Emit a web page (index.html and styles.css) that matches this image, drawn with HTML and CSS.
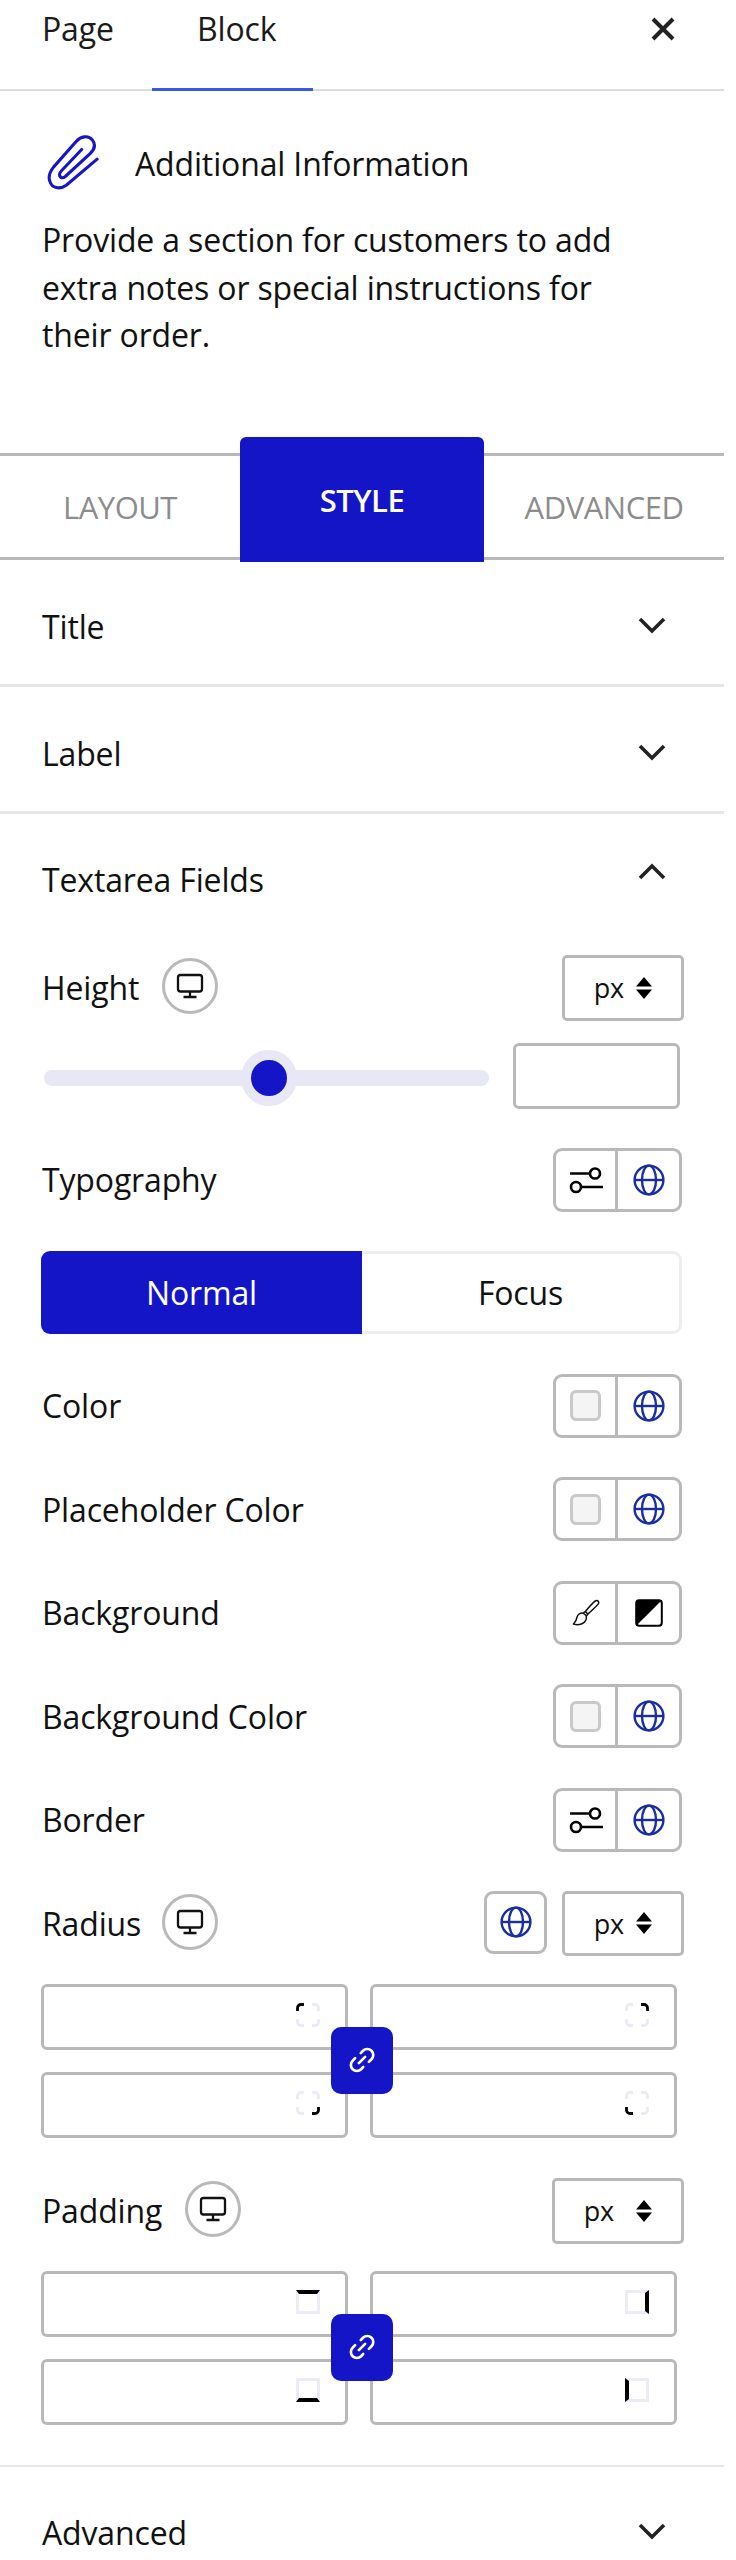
FILE: index.html
```html
<!DOCTYPE html>
<html lang="en">
<head>
<meta charset="utf-8">
<title>Additional Information</title>
<link rel="stylesheet" href="styles.css">
</head>
<body>
<svg class="defs" width="0" height="0" aria-hidden="true">
  <symbol id="globe" viewBox="0 0 32 32"><g fill="none" stroke="#1a2ea3" stroke-width="2.4"><circle cx="16" cy="16" r="14.4"/><ellipse cx="16" cy="16" rx="7" ry="14.4"/><path d="M2 16h28"/></g></symbol>
  <symbol id="sliders" viewBox="0 0 36 28"><g fill="none" stroke="#000" stroke-width="2.6"><path d="M2 7.5h19M13 21h22"/><circle cx="27" cy="7.5" r="5"/><circle cx="8" cy="21" r="5"/></g></symbol>
  <symbol id="monitor" viewBox="0 0 28 26"><g fill="none" stroke="#111" stroke-width="2.3"><rect x="2" y="2" width="24" height="16.5" rx="2.5"/><path d="M14 18.5v5M7.5 24h13"/></g></symbol>
  <symbol id="chev" viewBox="0 0 30 18"><path d="M3 3l12 12L27 3" fill="none" stroke="#222" stroke-width="3.6"/></symbol>
  <symbol id="updown" viewBox="0 0 16 22"><path d="M8 0l8 9.500H0zM8 22L0 12.500h16z" fill="#000"/></symbol>
  <symbol id="link" viewBox="0 0 24 24"><g fill="none" stroke="#fff" stroke-width="2.1" stroke-linecap="round"><path d="M9.500 14.500l5-5"/><path d="M11 6.500l1.800-1.900a4.800 4.800 0 0 1 6.800 6.800L17.500 13.500"/><path d="M6.500 10.500l-2 2.100a4.800 4.800 0 0 0 6.800 6.800L13 17.500"/></g></symbol>
  <symbol id="r-tl" viewBox="0 0 24 24"><g fill="none" stroke-width="2.8"><path stroke="#ebebf6" d="M16 1.500h3a3.500 3.500 0 0 1 3.500 3.500v3M22.500 16v3a3.500 3.500 0 0 1-3.500 3.500h-3M8 22.500H5A3.500 3.500 0 0 1 1.500 19v-3"/><path stroke="#000" d="M1.500 8V5A3.500 3.500 0 0 1 5 1.500h3"/></g></symbol>
</svg>

<div class="panel">
  <div class="topbar">
    <div class="toptab toptab-page">Page</div>
    <div class="toptab toptab-active">Block</div>
    <svg class="close" viewBox="0 0 26 26" aria-label="Close"><path d="M3 3l20 20M23 3L3 23" stroke="#222" stroke-width="4" fill="none"/></svg>
  </div>

  <div class="blockhead">
    <svg class="clip" viewBox="25 14 55 58"><path d="M77 39L45 66C38 71 30 69 28 62C26 57 28 52 32 47L55 21C60 15 68 14 72 19C76 24 74 29 70 33L44 57C41 59.500 38 58 38 55C38 53 39 52 41 50L61 29" fill="none" stroke="#1616c8" stroke-width="3.2" stroke-linecap="round"/></svg>
    <span class="blockname">Additional Information</span>
  </div>
  <p class="blockdesc">Provide a section for customers to add<br>extra notes or special instructions for<br>their order.</p>

  <div class="tabs">
    <div class="tab">LAYOUT</div>
    <div class="tab tab-active">STYLE</div>
    <div class="tab">ADVANCED</div>
  </div>

  <div class="acc-head acc-closed"><span>Title</span><svg class="chev"><use href="#chev"/></svg></div>
  <div class="acc-head acc-closed"><span>Label</span><svg class="chev"><use href="#chev"/></svg></div>

  <section class="acc-open">
    <div class="acc-head"><span>Textarea Fields</span><svg class="chev chev-up"><use href="#chev"/></svg></div>

    <div class="row row-height">
      <div class="lbl"><span>Height</span><span class="device"><svg><use href="#monitor"/></svg></span></div>
      <div class="select"><span>px</span><svg class="updown"><use href="#updown"/></svg></div>
    </div>

    <div class="slider-row">
      <div class="slider"><span class="knob"></span></div>
      <div class="numbox"></div>
    </div>

    <div class="row row-gap-typo">
      <span>Typography</span>
      <div class="pair"><div class="cell"><svg class="i-sliders"><use href="#sliders"/></svg></div><div class="cell"><svg class="i-globe"><use href="#globe"/></svg></div></div>
    </div>

    <div class="switch"><div class="sw sw-on">Normal</div><div class="sw">Focus</div></div>

    <div class="row row-first">
      <span>Color</span>
      <div class="pair"><div class="cell"><span class="swatch"></span></div><div class="cell"><svg class="i-globe"><use href="#globe"/></svg></div></div>
    </div>
    <div class="row">
      <span>Placeholder Color</span>
      <div class="pair"><div class="cell"><span class="swatch"></span></div><div class="cell"><svg class="i-globe"><use href="#globe"/></svg></div></div>
    </div>
    <div class="row">
      <span>Background</span>
      <div class="pair">
        <div class="cell"><svg class="i-brush" viewBox="0 0 28 28"><g fill="none" stroke="#111" stroke-width="1.5" stroke-linejoin="round"><path d="M26.500 4.500c.8-1.800-.9-3.600-2.800-2.700c-1.100.5-8 8-10.300 10.800l2.500 2.400c3-2.400 10-9.300 10.600-10.500z"/><path d="M13.400 12.600c-.8.300-1.500.9-1.900 1.600l2.800 2.600c.7-.4 1.300-1 1.600-1.800"/><path d="M11.500 14.200c-3-.8-6 1-6.500 4c-.3 2.600-1.400 4.700-3.500 6.800c4.500 1.500 10.500.3 12.300-3.700c.7-1.500.8-3 .5-4.500"/></g></svg></div>
        <div class="cell"><svg class="i-half" viewBox="0 0 28 28"><rect x="1.200" y="1.200" width="25.600" height="25.600" rx="3" fill="#fff" stroke="#000" stroke-width="2"/><path d="M4 1.200h22.800L1.200 26.800V4A3 3 0 0 1 4 1.200z" fill="#000"/></svg></div>
      </div>
    </div>
    <div class="row">
      <span>Background Color</span>
      <div class="pair"><div class="cell"><span class="swatch"></span></div><div class="cell"><svg class="i-globe"><use href="#globe"/></svg></div></div>
    </div>
    <div class="row">
      <span>Border</span>
      <div class="pair"><div class="cell"><svg class="i-sliders"><use href="#sliders"/></svg></div><div class="cell"><svg class="i-globe"><use href="#globe"/></svg></div></div>
    </div>

    <div class="row row-radius">
      <div class="lbl lbl-radius"><span>Radius</span><span class="device"><svg><use href="#monitor"/></svg></span></div>
      <div class="radius-right">
        <div class="globe-btn"><svg class="i-globe"><use href="#globe"/></svg></div>
        <div class="select"><span>px</span><svg class="updown"><use href="#updown"/></svg></div>
      </div>
    </div>

    <div class="quad">
      <div class="field"><svg class="corner"><use href="#r-tl"/></svg></div>
      <div class="field"><svg class="corner c-tr"><use href="#r-tl"/></svg></div>
      <div class="field"><svg class="corner c-bl"><use href="#r-tl"/></svg></div>
      <div class="field"><svg class="corner c-br"><use href="#r-tl"/></svg></div>
      <div class="linkbtn"><svg><use href="#link"/></svg></div>
    </div>

    <div class="row row-padding">
      <div class="lbl"><span>Padding</span><span class="device"><svg><use href="#monitor"/></svg></span></div>
      <div class="select select-wide"><span>px</span><svg class="updown"><use href="#updown"/></svg></div>
    </div>

    <div class="quad quad-padding">
      <div class="field"><span class="side side-top"></span></div>
      <div class="field"><span class="side side-right"></span></div>
      <div class="field"><span class="side side-bottom"></span></div>
      <div class="field"><span class="side side-left"></span></div>
      <div class="linkbtn"><svg><use href="#link"/></svg></div>
    </div>
  </section>

  <div class="acc-head acc-last"><span>Advanced</span><svg class="chev"><use href="#chev"/></svg></div>
</div>
</body>
</html>
```
FILE: styles.css
```css
* { box-sizing: border-box; }
html, body { margin: 0; padding: 0; background: #fff; }
body {
  font-family: "Open Sans", "Noto Sans", sans-serif;
  font-size: 32px;
  letter-spacing: -0.15px;
  color: #111;
}
.defs { position: absolute; }
.panel { width: 724px; height: 2560px; overflow: hidden; }

.topbar {
  display: flex;
  height: 91px;
  border-bottom: 2px solid #dcdcdc;
  position: relative;
  color: #1a1a1a;
}
.toptab { height: 91px; padding-top: 7px; }
.toptab-page { width: 152px; padding-left: 42px; }
.toptab-active {
  width: 161px;
  padding-left: 45px;
  border-bottom: 3px solid #3858e9;
}
.close { position: absolute; left: 650px; top: 16px; width: 26px; height: 26px; }

.blockhead { display: flex; align-items: center; height: 58px; margin-top: 43px; padding-left: 47px; }
.clip { width: 53px; height: 56px; flex: none; }
.blockname { margin-left: 35px; }
.blockdesc { margin: 24px 0 0; padding-left: 42px; line-height: 47.500px; }

.tabs {
  display: grid;
  grid-template-columns: 240px 244px 240px;
  height: 107px;
  margin-top: 94px;
  border-top: 3px solid #b9b9b9;
  border-bottom: 3px solid #b9b9b9;
  color: #8c8c8c;
  font-size: 31px;
  letter-spacing: -0.5px;
  text-align: center;
}
.tab { padding-top: 30px; }
.tab-active {
  margin-top: -19px;
  margin-bottom: -3px;
  height: 125px;
  padding-top: 42px;
  background: #1515c8;
  border-radius: 6px 6px 0 0;
  color: #fff;
  font-weight: 600;
}

.acc-head {
  display: flex;
  justify-content: space-between;
  align-items: center;
  padding: 10px 57px 0 42px;
  height: 127px;
}
.acc-closed { border-bottom: 3px solid #e6e6e6; }
.chev { width: 30px; height: 18px; flex: none; margin-top: -4px; }
.chev-up { transform: rotate(180deg); margin-top: -15px; }
.acc-open { border-bottom: 2px solid #e6e6e6; padding-bottom: 40px; }
.acc-open > .acc-head { height: 131px; padding-top: 1px; }
.acc-last { height: 130px; padding-top: 2px; }

.row {
  display: flex;
  justify-content: space-between;
  align-items: center;
  height: 64px;
  margin: 39.500px 42px 0 42px;
}
.row-height { height: 66px; margin-top: 10px; margin-right: 40px; }
.row-gap-typo { margin-top: 39px; }
.row-first { margin-top: 40px; }
.row-radius { height: 65px; margin-top: 39px; margin-right: 40px; }
.row-padding { height: 66px; margin-top: 40px; margin-right: 40px; }

.lbl { display: flex; align-items: center; gap: 23px; }
.lbl-radius { gap: 21px; }
.device {
  display: flex;
  align-items: center;
  justify-content: center;
  width: 56px;
  height: 56px;
  border: 3px solid #b9b9b9;
  border-radius: 50%;
  margin-top: -3px;
}
.device svg { width: 28px; height: 26px; }

.select {
  display: flex;
  align-items: center;
  justify-content: flex-end;
  gap: 12px;
  width: 122px;
  height: 100%;
  padding-right: 29px;
  border: 3px solid #b9b9b9;
  border-radius: 5px;
  font-size: 27px;
}
.select-wide { width: 132px; gap: 22px; }
.updown { width: 16px; height: 22px; flex: none; }

.slider-row { display: flex; align-items: flex-start; margin: 22px 44px 0 44px; }
.slider {
  position: relative;
  width: 445px;
  height: 16px;
  margin-top: 27px;
  background: #e7e7f5;
  border-radius: 8px;
  flex: none;
}
.knob {
  position: absolute;
  left: 197px;
  top: -20px;
  width: 56px;
  height: 56px;
  border-radius: 50%;
  background: #1515c8;
  border: 10px solid #e7e7f5;
}
.numbox { width: 167px; height: 66px; margin-left: 24px; border: 3px solid #b9b9b9; border-radius: 6px; }

.pair {
  display: grid;
  grid-template-columns: 62px 1fr;
  width: 129px;
  height: 64px;
  border: 3px solid #b9b9b9;
  border-radius: 9px;
}
.cell { display: flex; align-items: center; justify-content: center; }
.cell:first-child { border-right: 3px solid #b9b9b9; }
.i-globe { width: 32px; height: 32px; }
.i-sliders { width: 36px; height: 28px; }
.i-brush { width: 28px; height: 28px; }
.i-half { width: 28px; height: 28px; }
.swatch {
  width: 31px;
  height: 31px;
  background: #f4f4f4;
  border: 3px solid #c9c9c9;
  border-radius: 6px;
}

.switch {
  display: grid;
  grid-template-columns: 321px 1fr;
  height: 83px;
  margin: 39px 42px 0 41px;
  border-radius: 9px;
  text-align: center;
  line-height: 83px;
}
.sw { border: 3px solid #eee; border-left: 0; border-radius: 0 9px 9px 0; line-height: 77px; }
.sw-on { background: #1515c8; color: #fff; border: 0; border-radius: 9px 0 0 9px; line-height: 83px; }

.radius-right { display: flex; align-items: stretch; gap: 15px; height: 100%; }
.globe-btn {
  display: flex;
  align-items: center;
  justify-content: center;
  width: 63px;
  height: 63px;
  border: 3px solid #b9b9b9;
  border-radius: 9px;
}

.quad {
  position: relative;
  display: grid;
  grid-template-columns: 307px 307px;
  gap: 22px;
  margin: 28px 0 0 41px;
  width: 636px;
}
.quad-padding { margin-top: 27px; }
.field {
  display: flex;
  align-items: flex-start;
  justify-content: flex-end;
  height: 66px;
  padding: 16px 25px 0 0;
  border: 3px solid #b9b9b9;
  border-radius: 6px;
}
.corner { width: 24px; height: 24px; }
.c-tr { transform: rotate(90deg); }
.c-br { transform: rotate(270deg); }
.c-bl { transform: rotate(180deg); }
.side { width: 24px; height: 24px; border: 3px solid #ececf8; }
.side-top { border-top: 4px solid #000; }
.side-right { border-right: 4px solid #000; }
.side-bottom { border-bottom: 4px solid #000; }
.side-left { border-left: 4px solid #000; }
.linkbtn {
  position: absolute;
  left: 290px;
  top: 43px;
  display: flex;
  align-items: center;
  justify-content: center;
  width: 62px;
  height: 67px;
  background: #1515c8;
  border-radius: 10px;
}
.linkbtn svg { width: 30px; height: 30px; }
```
